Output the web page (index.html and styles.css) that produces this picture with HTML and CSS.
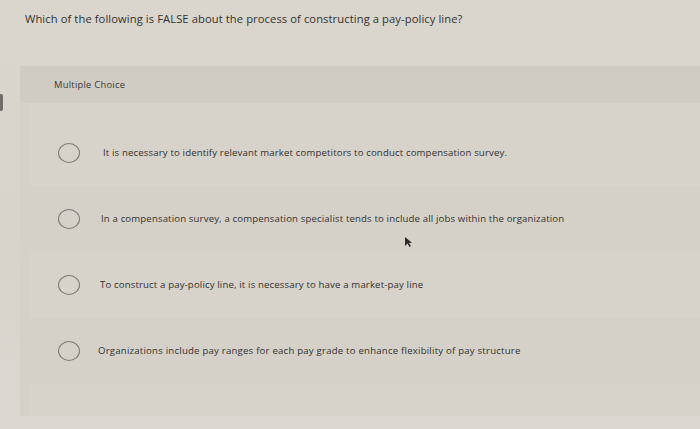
FILE: index.html
```html
<!DOCTYPE html>
<html lang="en">
<head>
<meta charset="utf-8">
<title>Question</title>
<link rel="stylesheet" href="styles.css">
</head>
<body>
<div class="screen">
  <div class="edge-mark"></div>
  <p class="question">Which of the following is FALSE about the process of constructing a pay-policy line?</p>
  <section class="panel">
    <header class="panel-head">Multiple Choice</header>
    <div class="options">
      <label class="option"><span class="radio"></span><span class="opt-text t1">It is necessary to identify relevant market competitors to conduct compensation survey.</span></label>
      <label class="option alt"><span class="radio"></span><span class="opt-text t2">In a compensation survey, a compensation specialist tends to include all jobs within the organization</span></label>
      <label class="option"><span class="radio"></span><span class="opt-text t3">To construct a pay-policy line, it is necessary to have a market-pay line</span></label>
      <label class="option alt"><span class="radio"></span><span class="opt-text t4">Organizations include pay ranges for each pay grade to enhance flexibility of pay structure</span></label>
    </div>
  </section>
  <svg class="cursor" width="9" height="12" viewBox="0 0 9 12"><path d="M1 1 L1 10 L3.5 7.5 L5.5 11 L7 10.3 L5 7 L8 6.8 Z" fill="#2e2d2b"/></svg>
</div>
</body>
</html>
```
FILE: styles.css
```css
* { box-sizing: border-box; }
html, body { margin: 0; padding: 0; }
body {
  width: 700px;
  height: 429px;
  overflow: hidden;
  background: #dbd7cf;
  font-family: "Open Sans", Lato, sans-serif;
  color: #3a3937;
}
.screen {
  position: relative;
  width: 700px;
  height: 429px;
  padding-top: 12px;
  background: linear-gradient(180deg, #dad6ce 0%, #d8d4cc 60%, #dcd8d1 100%);
}
.edge-mark {
  position: absolute;
  left: 0;
  top: 94px;
  width: 3px;
  height: 17px;
  background: #6f6c68;
  border-radius: 0 2px 2px 0;
}
.question {
  margin: 0 0 0 25px;
  font-size: 11.2px;
  line-height: 14px;
  font-weight: 400;
  letter-spacing: 0.09px;
  color: #32312f;
}
.panel {
  margin: 40px 0 0 20px;
  background: #d5d1c9;
  height: 350px;
}
.panel-head {
  height: 37px;
  padding: 13px 0 0 34px;
  font-size: 9.4px;
  line-height: 12px;
  letter-spacing: 0.25px;
  background: #d0ccc4;
  color: #3a3937;
}
.options {
  margin-left: 10px;
  padding-top: 17px;
  background: #d7d3cb;
  height: 313px;
}
.option {
  display: flex;
  align-items: center;
  height: 66px;
  padding-left: 28px;
}
.option.alt { background: #d5d1c9; }
.radio {
  flex: none;
  width: 22px;
  height: 20px;
  border: 1.6px solid #7b7976;
  border-radius: 50%;
  margin-right: 23px;
}
.opt-text {
  font-size: 9.6px;
  line-height: 12px;
  letter-spacing: 0.15px;
  color: #32312f;
}
.t2 { margin-left: -2px; }
.t3 { margin-left: -3px; }
.t4 { margin-left: -5px; letter-spacing: 0.22px; }
.cursor {
  position: absolute;
  left: 404px;
  top: 236px;
}
```
